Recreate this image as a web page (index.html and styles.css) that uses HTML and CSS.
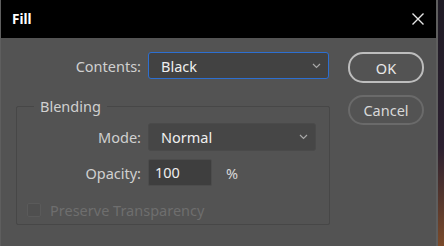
FILE: index.html
```html
<!DOCTYPE html>
<html>
	<head>
		<meta charset="UTF-8">
		<title>Fill</title>
		<link rel="stylesheet" href="styles.css">
	</head>
	<body>
		<div class="dialog">
			<div class="titlebar">
				<span class="title">Fill</span>
				<svg class="close" width="14" height="14" viewBox="0 0 14 14"><path d="M1.5 1.5 L12.5 12.5 M12.5 1.5 L1.5 12.5" stroke="#e6e6e6" stroke-width="1.4" fill="none"/></svg>
			</div>
			<div class="content">
				<div class="main">
					<div class="row top-row">
						<label class="lbl">Contents:</label>
						<div class="select focus">
							<span>Black</span>
							<svg class="chev" width="9" height="6" viewBox="0 0 9 6"><path d="M1 1 L4.5 4.5 L8 1" stroke="#a8a8a8" stroke-width="1.2" fill="none"/></svg>
						</div>
					</div>
					<fieldset class="group">
						<legend>Blending</legend>
						<div class="grid">
							<label class="lbl">Mode:</label>
							<div class="select mode">
								<span>Normal</span>
								<svg class="chev" width="9" height="6" viewBox="0 0 9 6"><path d="M1 1 L4.5 4.5 L8 1" stroke="#a8a8a8" stroke-width="1.2" fill="none"/></svg>
							</div>
							<label class="lbl">Opacity:</label>
							<div class="opacity">
								<div class="input">100</div>
								<span class="pct">%</span>
							</div>
						</div>
						<div class="check disabled">
							<span class="box"></span>
							<span>Preserve Transparency</span>
						</div>
					</fieldset>
				</div>
				<div class="buttons">
					<div class="btn primary">OK</div>
					<div class="btn">Cancel</div>
				</div>
			</div>
		</div>
	</body>
</html>
```
FILE: styles.css
```css
* { margin:0; padding:0; box-sizing:border-box; }
html, body { width:444px; height:246px; overflow:hidden; }
body { background:linear-gradient(#1e1a24, #2c2030 60%, #7a4a2a); font-family:"Noto Sans", sans-serif; font-size:14.5px; color:#d2d2d2; }

.dialog { width:438px; height:246px; background:#535353; border-left:1px solid #5e5e5e; border-right:2px solid #5e5e5e; }
.titlebar { height:38px; background:#000; display:flex; align-items:center; justify-content:space-between; padding:0 11px 0 11px; }
.title { color:#fff; font-weight:bold; font-size:13.5px; }

.content { display:flex; padding:14px 0 0 15px; }
.main { width:314px; }

.row { display:grid; grid-template-columns:125px 181px; column-gap:7px; align-items:center; }
.lbl { text-align:right; color:#d0d0d0; }

.select { height:28px; background:#464646; border:1px solid #4a4a4a; border-radius:3px; display:flex; align-items:center; justify-content:space-between; padding:0 7px 0 12px; color:#efefef; }
.select.focus { height:27px; border-color:#2d6fd1; background:#424242; }

.group { margin-top:18px; height:128px; border:1px solid #474747; border-radius:2px; padding:7px 0 0 0; }
.group legend { margin-left:17px; padding:0 6px; line-height:19px; color:#d0d0d0; }

.grid { display:grid; grid-template-columns:124px 168px; column-gap:7px; row-gap:8px; align-items:center; }
.opacity { display:flex; align-items:center; gap:14px; }
.input { width:64px; height:27px; background:#3e3e3e; border:1px solid #4c4c4c; border-radius:2px; padding:0 6px; line-height:25px; color:#efefef; }
.pct { color:#d8d8d8; }

.check { display:flex; align-items:center; gap:9px; margin:14px 0 0 10px; }
.check .box { width:14px; height:14px; border:1px solid #5a5a5a; background:#4f4f4f; border-radius:2px; }
.check.disabled { color:#6e6e6e; }

.buttons { display:flex; flex-direction:column; gap:12px; margin-left:18px; }
.btn { width:76px; height:30px; border:2px solid #6a6a6a; border-radius:15px; display:flex; align-items:center; justify-content:center; color:#d8d8d8; }
.btn.primary { height:31px; border-color:#bdbdbd; color:#e8e8e8; }
```
